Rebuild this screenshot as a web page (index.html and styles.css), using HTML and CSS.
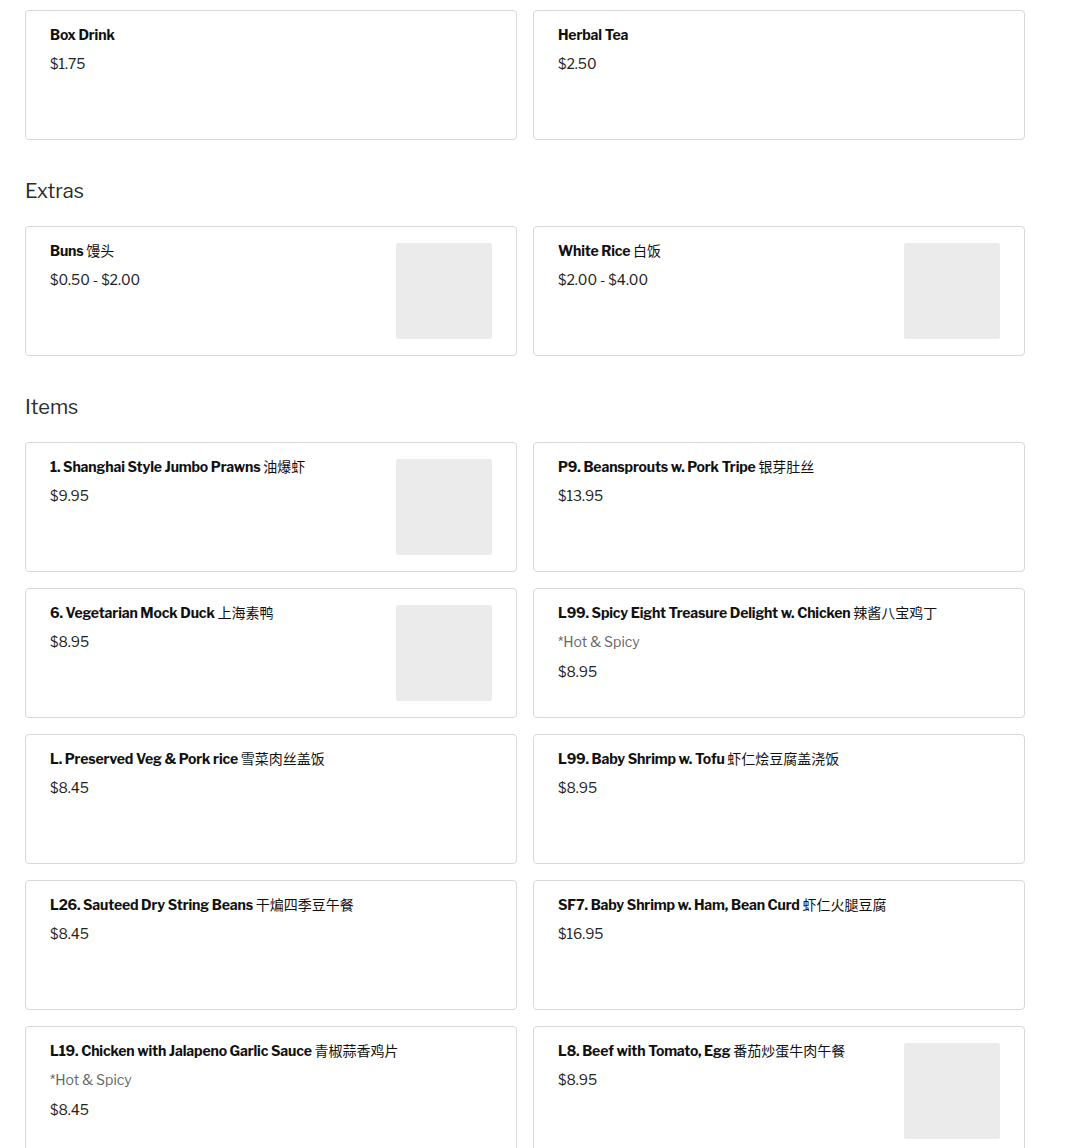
FILE: index.html
```html
<!DOCTYPE html>
<html lang="en">
<head>
<meta charset="utf-8">
<title>Menu</title>
<link rel="stylesheet" href="styles.css">
</head>
<body>
<main class="menu">
  <section class="section">
    <div class="grid">
      <article class="card"><div class="info"><h3 class="title">Box Drink</h3><p class="price">$1.75</p></div></article>
      <article class="card"><div class="info"><h3 class="title">Herbal Tea</h3><p class="price">$2.50</p></div></article>
    </div>
  </section>

  <section class="section">
    <h2 class="heading">Extras</h2>
    <div class="grid">
      <article class="card"><div class="info"><h3 class="title">Buns <span class="zh">馒头</span></h3><p class="price">$0.50 - $2.00</p></div><div class="thumb"></div></article>
      <article class="card"><div class="info"><h3 class="title">White Rice <span class="zh">白饭</span></h3><p class="price">$2.00 - $4.00</p></div><div class="thumb"></div></article>
    </div>
  </section>

  <section class="section">
    <h2 class="heading">Items</h2>
    <div class="grid">
      <article class="card"><div class="info"><h3 class="title">1. Shanghai Style Jumbo Prawns <span class="zh">油爆虾</span></h3><p class="price">$9.95</p></div><div class="thumb"></div></article>
      <article class="card"><div class="info"><h3 class="title">P9. Beansprouts w. Pork Tripe <span class="zh">银芽肚丝</span></h3><p class="price">$13.95</p></div></article>
      <article class="card"><div class="info"><h3 class="title">6. Vegetarian Mock Duck <span class="zh">上海素鸭</span></h3><p class="price">$8.95</p></div><div class="thumb"></div></article>
      <article class="card"><div class="info"><h3 class="title">L99. Spicy Eight Treasure Delight w. Chicken <span class="zh">辣酱八宝鸡丁</span></h3><p class="note">*Hot &amp; Spicy</p><p class="price">$8.95</p></div></article>
      <article class="card"><div class="info"><h3 class="title">L. Preserved Veg &amp; Pork rice <span class="zh">雪菜肉丝盖饭</span></h3><p class="price">$8.45</p></div></article>
      <article class="card"><div class="info"><h3 class="title">L99. Baby Shrimp w. Tofu <span class="zh">虾仁烩豆腐盖浇饭</span></h3><p class="price">$8.95</p></div></article>
      <article class="card"><div class="info"><h3 class="title">L26. Sauteed Dry String Beans <span class="zh">干煸四季豆午餐</span></h3><p class="price">$8.45</p></div></article>
      <article class="card"><div class="info"><h3 class="title">SF7. Baby Shrimp w. Ham, Bean Curd <span class="zh">虾仁火腿豆腐</span></h3><p class="price">$16.95</p></div></article>
      <article class="card"><div class="info"><h3 class="title">L19. Chicken with Jalapeno Garlic Sauce <span class="zh">青椒蒜香鸡片</span></h3><p class="note">*Hot &amp; Spicy</p><p class="price">$8.45</p></div></article>
      <article class="card"><div class="info"><h3 class="title">L8. Beef with Tomato, Egg <span class="zh">番茄炒蛋牛肉午餐</span></h3><p class="price">$8.95</p></div><div class="thumb"></div></article>
    </div>
  </section>
</main>
</body>
</html>
```

FILE: styles.css
```css
* { box-sizing: border-box; }

html, body {
  margin: 0;
  padding: 0;
  background: #ffffff;
}

body {
  font-family: "Libre Franklin", Lato, "Noto Sans CJK SC", sans-serif;
  color: #1c1c1c;
}

.menu {
  width: 1000px;
  margin-left: 25px;
  padding-top: 10px;
}

.heading {
  margin: 39px 0 23px;
  font-size: 20px;
  line-height: 24px;
  font-weight: 400;
  color: #2b2b2b;
}

.grid {
  display: grid;
  grid-template-columns: 1fr 1fr;
  gap: 16px;
}

.card {
  display: flex;
  justify-content: space-between;
  align-items: flex-start;
  gap: 16px;
  min-height: 130px;
  padding: 16px 24px;
  border: 1px solid #d9d9d9;
  border-radius: 4px;
  background: #fff;
}

.info {
  flex: 1;
  min-width: 0;
}

.title {
  margin: -1px 0 0;
  font-size: 14px;
  line-height: 17px;
  font-weight: 700;
  letter-spacing: -0.15px;
  color: #111;
}

.zh {
  font-family: "Noto Sans CJK SC", sans-serif;
  font-weight: 400;
  letter-spacing: 0;
}

.note {
  margin: 12px 0 0;
  font-size: 14px;
  line-height: 17px;
  color: #666;
}

.note + .price {
  margin-top: 13px;
}

.price {
  margin: 12px 0 0;
  font-size: 14px;
  line-height: 18px;
  color: #222;
}

.thumb {
  flex: 0 0 96px;
  width: 96px;
  height: 96px;
  background: #ebebeb;
  border-radius: 2px;
}
```
